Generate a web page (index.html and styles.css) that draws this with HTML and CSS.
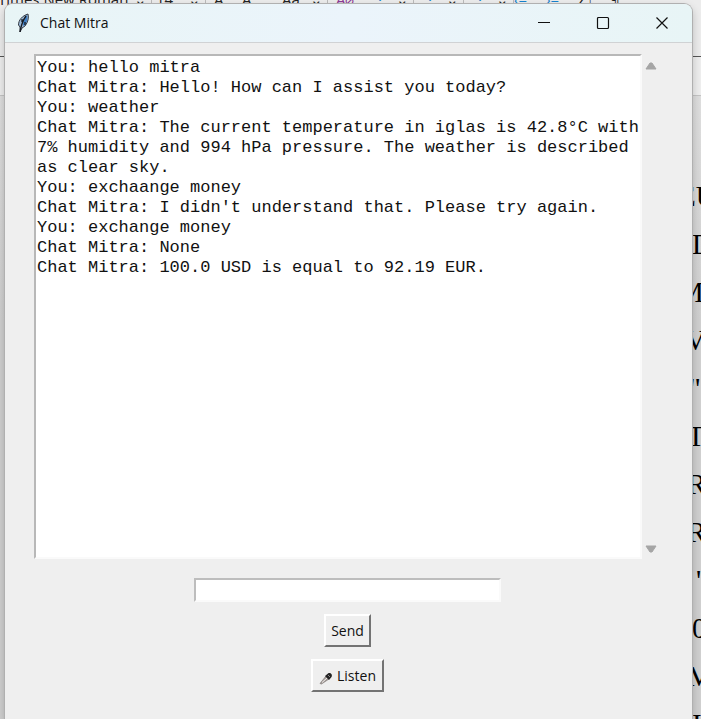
FILE: index.html
```html
<!DOCTYPE html>
<html lang="en">
<head>
<meta charset="utf-8">
<title>Chat Mitra</title>
<meta name="viewport" content="width=device-width, initial-scale=1">
<link rel="stylesheet" href="styles.css">
</head>
<body>
<div class="screen">
  <div class="backdrop" aria-hidden="true">
    <div class="ribbon">
      <span class="font-name">Times New Roman</span>
      <span class="tool caret">⌄</span>
      <span class="tool size">14</span>
      <span class="tool caret">⌄</span>
      <span class="tool wide">A</span>
      <span class="tool">A</span>
      <span class="tool wide">Aa</span>
      <span class="tool caret">⌄</span>
      <span class="tool wide purple">A⌀</span>
      <span class="tool blue list">⁝</span>
      <span class="tool caret">⌄</span>
      <span class="tool blue list">⁝</span>
      <span class="tool caret">⌄</span>
      <span class="tool blue list">⁝</span>
      <span class="tool caret">⌄</span>
      <span class="tool blue">‹=</span>
      <span class="tool blue">›=</span>
      <span class="tool">Z↓</span>
      <span class="tool">¶</span>
    </div>
    <div class="ruler"></div>
    <ul class="document">
      <li class="in-1">EU</li>
      <li class="in-5">D</li>
      <li class="in-1">M</li>
      <li class="in-2">V</li>
      <li class="in-4">"</li>
      <li class="in-3">T</li>
      <li class="in-3">R</li>
      <li class="in-3">R</li>
      <li class="in-6">'</li>
      <li class="in-5">0</li>
      <li class="in-3">M</li>
      <li class="in-5">I</li>
    </ul>
  </div>

  <main class="window">
    <header class="titlebar">
      <svg class="feather" viewBox="0 0 14 20" aria-hidden="true">
        <path d="M3 19 3 14 1.500 12C1.500 7 5 3 11 1c1 4 0 8-3 12l-3 2z" fill="#9bb8d6" stroke="#343a43"/>
        <path d="M6 12C5 9 7 5 10 2c1 4 0 8-3 11z" fill="#3f7fc4"/>
        <path d="M3 19C4 13 6 7 9 3M5 6v3M8 9v3" fill="none" stroke="#15191f" stroke-width="1.300"/>
      </svg>
      <h1>Chat Mitra</h1>
      <div class="controls">
        <button type="button" aria-label="Minimize"><svg viewBox="0 0 14 14"><path d="M1 6.500h12"/></svg></button>
        <button type="button" aria-label="Maximize"><svg viewBox="0 0 14 14"><rect x="1.500" y="1.500" width="11" height="11" rx="1"/></svg></button>
        <button type="button" aria-label="Close"><svg viewBox="0 0 14 14"><path d="M1.500 1.500l11 11M12.500 1.500l-11 11"/></svg></button>
      </div>
    </header>

    <div class="content">
      <section class="history">
        <div class="log" role="log" aria-label="Conversation" tabindex="0">
          <p>You: hello mitra</p>
          <p>Chat Mitra: Hello! How can I assist you today?</p>
          <p>You: weather</p>
          <p>Chat Mitra: The current temperature in iglas is 42.8°C with 7% humidity and 994 hPa pressure. The weather is described as clear sky.</p>
          <p>You: exchaange money</p>
          <p>Chat Mitra: I didn't understand that. Please try again.</p>
          <p>You: exchange money</p>
          <p>Chat Mitra: None</p>
          <p>Chat Mitra: 100.0 USD is equal to 92.19 EUR.</p>
        </div>
        <div class="scrollbar">
          <button type="button" aria-label="Scroll up"><svg viewBox="0 0 12 8"><path d="M1 7h10L7 1H5z"/></svg></button>
          <button type="button" aria-label="Scroll down"><svg viewBox="0 0 12 8"><path d="M1 1h10L7 7H5z"/></svg></button>
        </div>
      </section>

      <form class="composer">
        <input class="entry" type="text" aria-label="Message">
        <button class="push" type="button">Send</button>
        <button class="push listen" type="button">
          <svg viewBox="0 0 14 14" aria-hidden="true">
            <path d="M1 12.500 7 5l3 3-7.500 5z" fill="#a39c98" stroke="#77706d" stroke-width=".6"/>
            <path d="M3 11.500 8 7" stroke="#f3eeee" fill="none"/>
            <path d="M6 5 9 2.500c2-1.500 5 1 3.500 3.500L10 9z" fill="#242424"/>
            <path d="M9 4l2 2" stroke="#888"/>
          </svg>
          Listen
        </button>
      </form>
    </div>
  </main>
</div>
</body>
</html>
```
FILE: styles.css
```css
* {
  box-sizing: border-box;
}

body {
  margin: 0;
  font-family: "Open Sans", "Noto Sans", sans-serif;
  font-size: 14px;
  color: #111;
}

.screen {
  display: grid;
  grid-template: minmax(0, 1fr) / minmax(0, 1fr);
  height: 100vh;
  overflow: hidden;
}

.backdrop,
.window {
  grid-area: 1 / 1;
}

/* Document editor behind the chat window */
.backdrop {
  display: flex;
  flex-direction: column;
  min-height: 0;
  overflow: hidden;
  background: linear-gradient(to bottom, #e4e4e4, #d0d0d0 320px);
}

.ribbon {
  display: flex;
  flex: none;
  height: 57px;
  overflow: hidden;
  background: #ececec;
  border-bottom: 1px solid #555;
  color: #222;
  font-size: 15px;
  line-height: 20px;
  white-space: nowrap;
}

.ribbon span {
  flex: none;
  margin-top: -11px;
}

.font-name {
  width: 136px;
  margin-left: -2px;
}

.tool {
  width: 32px;
}

.tool.caret {
  width: 18px;
  border-right: 1px solid #bbb;
}

.tool.size {
  width: 36px;
  padding-left: 4px;
}

.tool.wide {
  width: 36px;
  padding-left: 8px;
}

.tool.list {
  padding-left: 14px;
}

.blue {
  color: #1683cf;
}

.purple {
  color: #8c3a96;
}

.ruler {
  flex: none;
  height: 39px;
  background: #eee;
  border-bottom: 1px solid #c4c4c4;
}

.document {
  align-self: flex-end;
  width: 24px;
  margin: 0;
  padding: 76px 0 0;
  list-style: none;
  color: #000;
  font-family: "Liberation Serif", serif;
  font-size: 29px;
  line-height: 48px;
  white-space: nowrap;
}

.in-1 { padding-left: 1px; }
.in-2 { padding-left: 8px; }
.in-3 { padding-left: 10px; }
.in-4 { padding-left: 12px; }
.in-5 { padding-left: 15px; }
.in-6 { padding-left: 19px; }

/* Chat window */
.window {
  display: flex;
  flex-direction: column;
  min-height: 0;
  margin: 3px 8px 0 4px;
  background: #efefef;
  border: 1px solid #b0b0b0;
  border-bottom: 0;
  border-radius: 9px 9px 0 0;
  overflow: hidden;
  box-shadow: 0 4px 8px rgba(0, 0, 0, .2);
}

.titlebar {
  display: flex;
  flex: none;
  align-items: center;
  height: 39px;
  padding: 0 1px 0 12px;
  background: linear-gradient(to right, #e8f5f6, #ebf4fb 50%, #e8f5f6);
  border-bottom: 1px solid #d0d2d4;
}

.feather {
  width: 14px;
  height: 20px;
}

.titlebar h1 {
  margin: 0 0 1px 9px;
  font-size: 14px;
  font-weight: 400;
}

.controls {
  display: flex;
  height: 100%;
  margin-left: auto;
}

.controls button {
  display: grid;
  place-items: center;
  width: 59px;
  padding: 0;
  border: 0;
  background: none;
}

.controls svg {
  width: 14px;
  height: 14px;
  fill: none;
  stroke: #111;
  stroke-width: 1.2;
}

.content {
  display: flex;
  flex: 1;
  flex-direction: column;
  min-height: 0;
  padding: 11px 32px 27px 29px;
}

.history {
  display: flex;
  flex: 1;
  min-height: 0;
}

.log {
  flex: 1;
  min-width: 0;
  padding: 2px 0 0 1px;
  overflow: hidden;
  background: #fff;
  border: 2px solid;
  border-color: #b8b8b8 #fafafa #fafafa #b8b8b8;
  font-family: "Liberation Mono", monospace;
  font-size: 17px;
  line-height: 20px;
}

.log p {
  margin: 0;
}

.scrollbar {
  display: flex;
  flex: none;
  flex-direction: column;
  justify-content: space-between;
  width: 18px;
  padding: 4px 0 2px;
}

.scrollbar button {
  display: grid;
  place-items: center;
  height: 16px;
  padding: 0;
  border: 0;
  background: none;
}

.scrollbar svg {
  width: 12px;
  height: 8px;
  fill: #a5a5a5;
  stroke: #a5a5a5;
  stroke-linejoin: round;
}

.composer {
  display: flex;
  flex: none;
  flex-direction: column;
  align-items: center;
  gap: 12px;
  padding: 19px 0 0 1px;
}

.entry {
  width: 49%;
  height: 24px;
  padding: 0 2px;
  background: #fff;
  border: 2px solid;
  border-color: #bdbdbd #fafafa #fafafa #bdbdbd;
  border-radius: 0;
  font: inherit;
}

.push {
  display: flex;
  align-items: center;
  gap: 4px;
  height: 33px;
  padding: 0 5px;
  background: #efefef;
  border: 2px solid;
  border-color: #fff #737373 #737373 #fff;
  border-radius: 0;
  color: #111;
  font: inherit;
}

.listen {
  padding: 0 6px;
}

.push svg {
  width: 14px;
  height: 14px;
  margin-top: 4px;
}
```
